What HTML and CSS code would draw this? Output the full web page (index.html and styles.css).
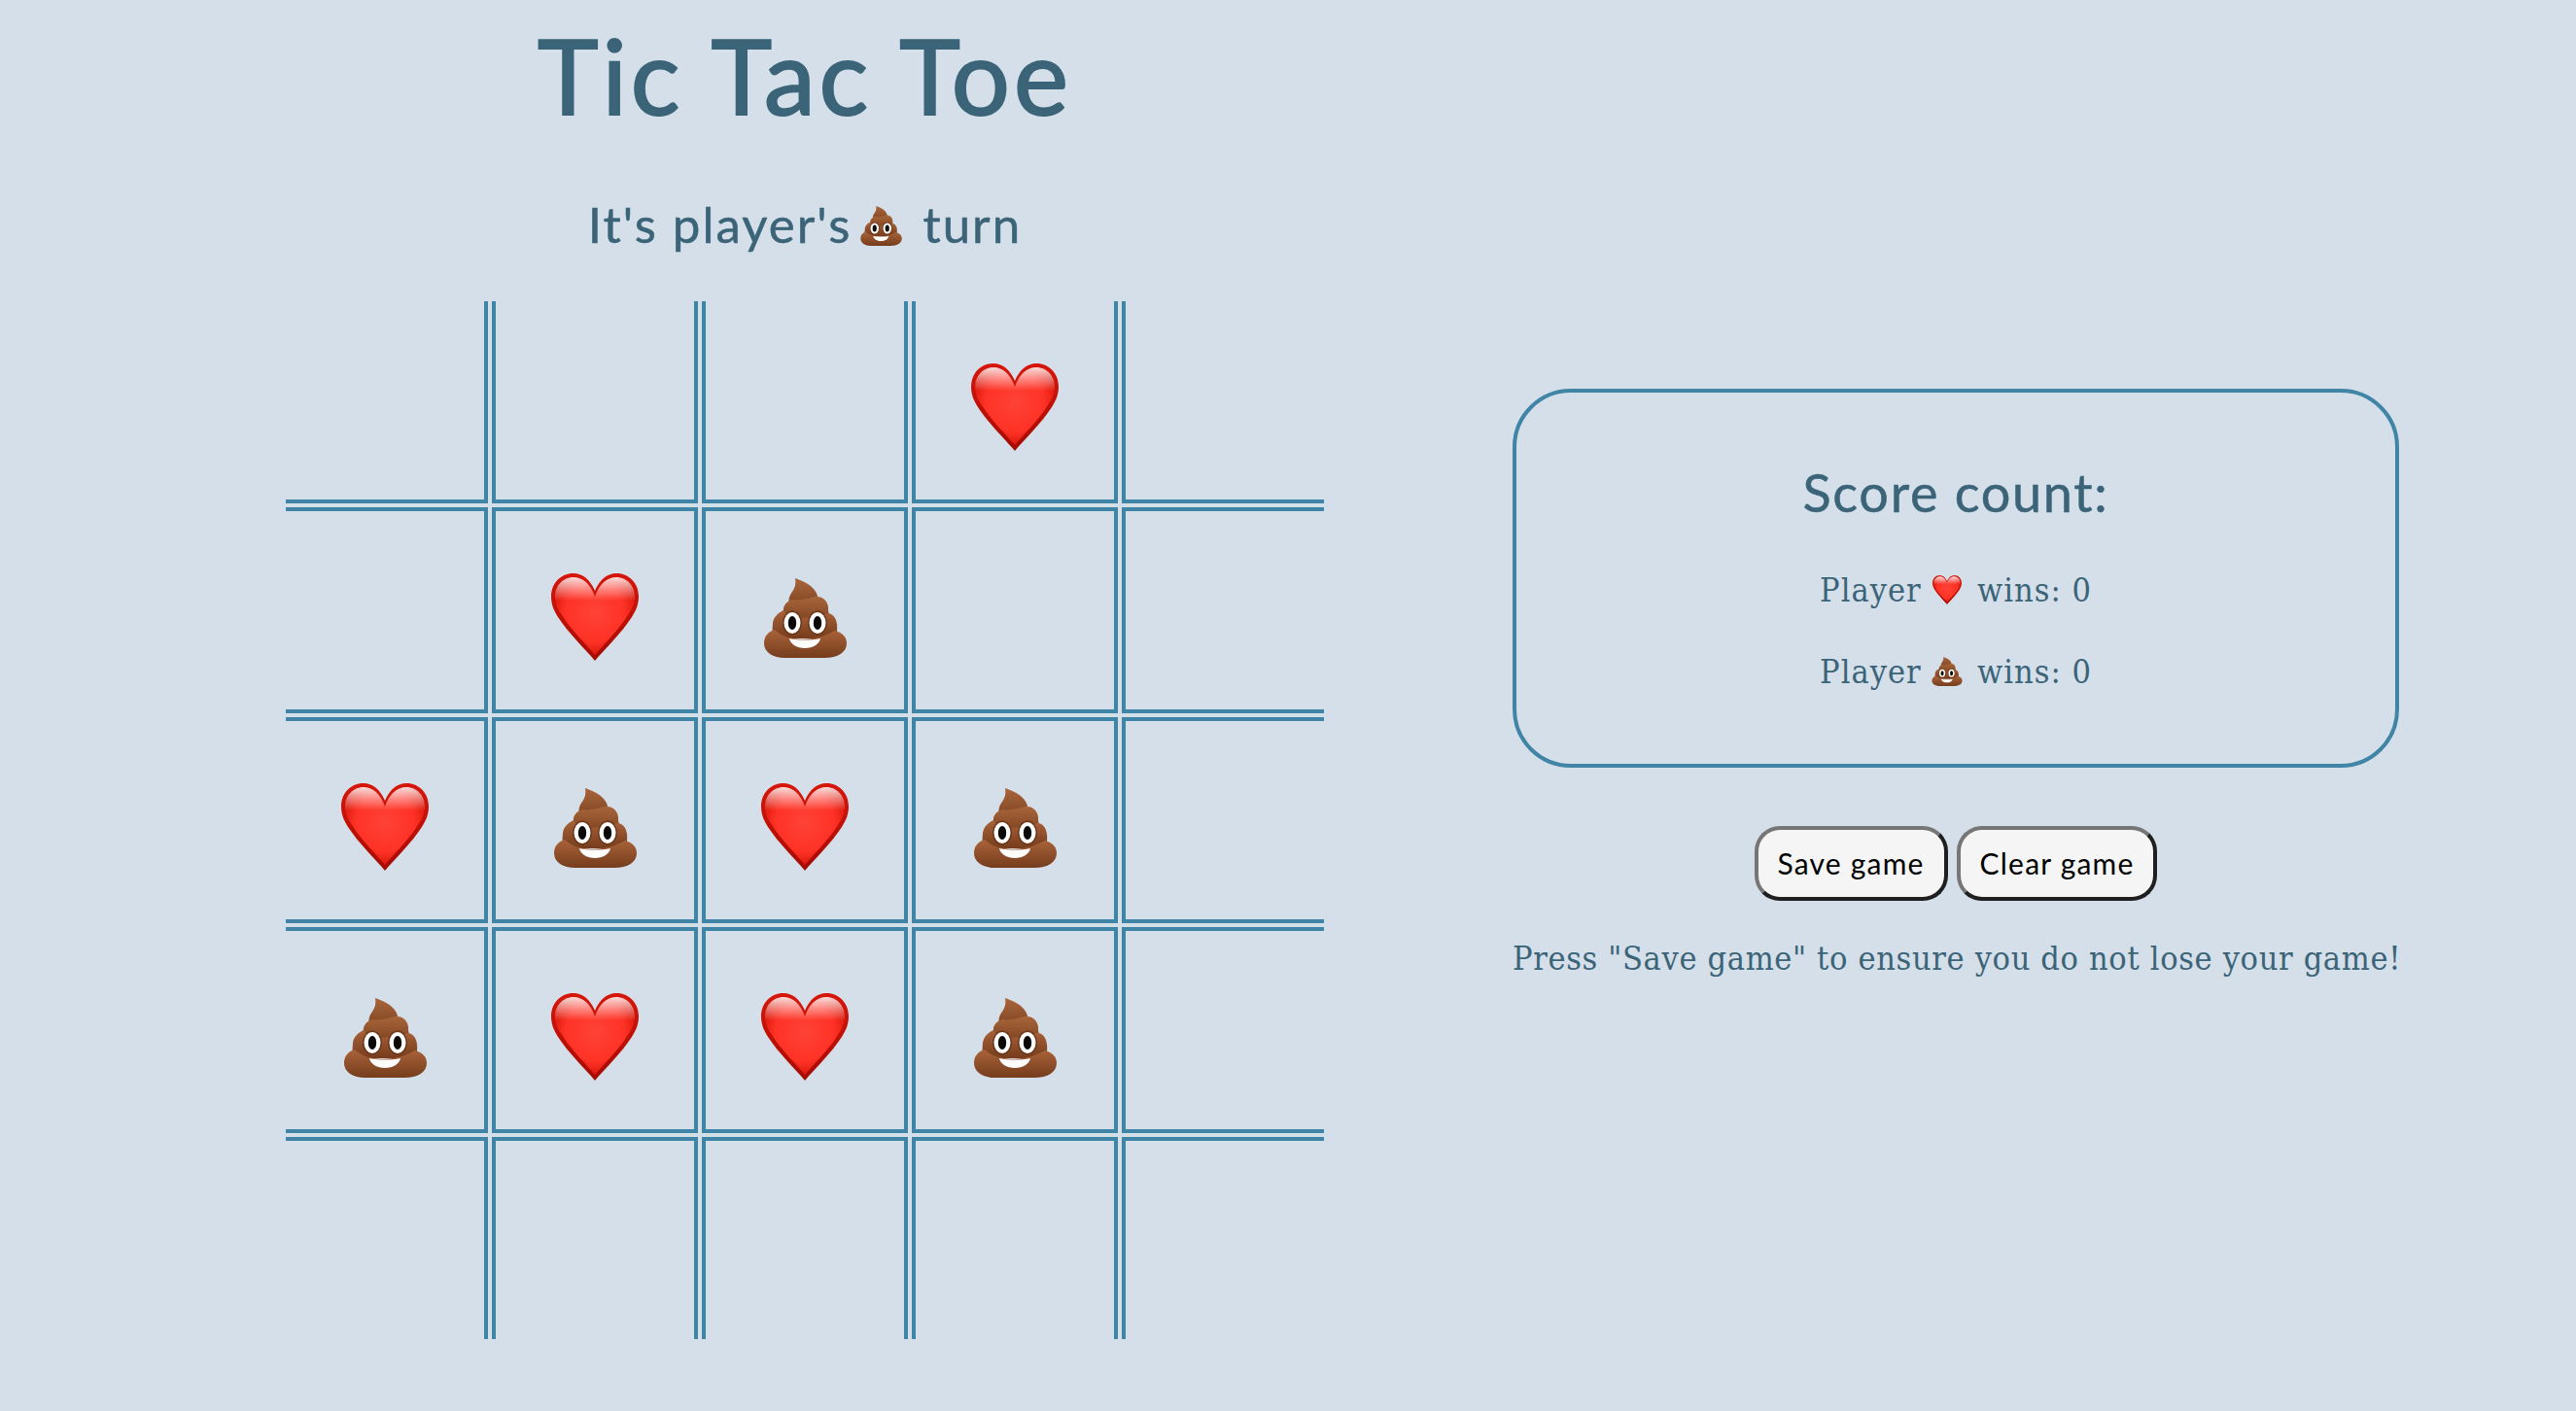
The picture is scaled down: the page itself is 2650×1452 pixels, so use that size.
FILE: index.html
```html
<!DOCTYPE html>
<html>
  <head>
    <meta charset="utf-8">
    <title>Tic Tac Toe</title>
    <link rel="stylesheet" href="styles.css">
  </head>

  <body>
    <!-- Emoji drawn once, reused below -->
    <svg class="icon-defs" aria-hidden="true">
      <defs>
        <linearGradient id="heartRim" x1="0" y1="0" x2="0" y2="1">
          <stop offset="0" stop-color="#d8160a"/>
          <stop offset="1" stop-color="#a50b02"/>
        </linearGradient>
        <radialGradient id="heartFill" gradientUnits="userSpaceOnUse" cx="45" cy="40" r="50">
          <stop offset="0" stop-color="#ff4236"/>
          <stop offset="0.6" stop-color="#ff3226"/>
          <stop offset="0.85" stop-color="#e01c10"/>
          <stop offset="1" stop-color="#b50d03"/>
        </radialGradient>
        <linearGradient id="heartShine" gradientUnits="userSpaceOnUse" x1="0" y1="4" x2="0" y2="28">
          <stop offset="0" stop-color="#ffffff" stop-opacity="0.85"/>
          <stop offset="1" stop-color="#ffffff" stop-opacity="0"/>
        </linearGradient>
        <linearGradient id="poopTop" x1="0" y1="0" x2="0" y2="1">
          <stop offset="0" stop-color="#a9653a"/>
          <stop offset="1" stop-color="#7f4522"/>
        </linearGradient>
        <linearGradient id="poopBase" x1="0" y1="0" x2="0" y2="1">
          <stop offset="0" stop-color="#a9633a"/>
          <stop offset="1" stop-color="#763c1c"/>
        </linearGradient>
      </defs>
      <symbol id="heart" viewBox="0 0 90 90">
        <path fill="url(#heartRim)" d="M45 90C36 79 18 62 7 45C2 37 0 31 0 24C0 10 10 0 23 0C32 0 40 6 45 18C50 6 58 0 67 0C80 0 90 10 90 24C90 31 88 37 83 45C72 62 54 79 45 90Z"/>
        <path fill="url(#heartFill)" d="M45 84C37 74 21 59 11 43C6 36 4 30 4 24C4 13 12 4 23 4C32 4 40 10 45 24C50 10 58 4 67 4C78 4 86 13 86 24C86 30 84 36 79 43C69 59 53 74 45 84Z"/>
        <path fill="url(#heartShine)" d="M45 84C37 74 21 59 11 43C6 36 4 30 4 24C4 13 12 4 23 4C32 4 40 10 45 24C50 10 58 4 67 4C78 4 86 13 86 24C86 30 84 36 79 43C69 59 53 74 45 84Z"/>
      </symbol>
      <symbol id="poop" viewBox="0 0 85 82">
        <path fill="url(#poopTop)" d="M32 0C37 2 46 5 51 11C56 17 56 22 54 26L28 30C24 26 25 19 29 14C32 10 33 5 32 0Z"/>
        <path fill="url(#poopTop)" d="M30 22C38 24 46 20 53 19C62 18 67 26 66 33L68 44H19L20 31C21 26 25 23 30 22Z"/>
        <path fill="url(#poopBase)" d="M20 33C26 44 42 42 66 36C73 37 76 45 75 54L76 62H8L9 46C10 40 14 36 20 33Z"/>
        <path fill="url(#poopBase)" d="M11 53C24 66 52 66 73 54C81 56 85 61 85 67C85 76 76 82 62 82H22C9 82 0 76 0 67C0 60 4 55 11 53Z"/>
        <ellipse fill="#6b3618" cx="29" cy="46" rx="10" ry="12.5"/>
        <ellipse fill="#6b3618" cx="55" cy="46" rx="10" ry="12.5"/>
        <ellipse fill="#ffffff" cx="29" cy="46" rx="8.5" ry="11"/>
        <ellipse fill="#ffffff" cx="55" cy="46" rx="8.5" ry="11"/>
        <ellipse fill="#0c0a08" cx="29" cy="46" rx="4.2" ry="7"/>
        <ellipse fill="#0c0a08" cx="55" cy="46" rx="4.2" ry="7"/>
        <path fill="#ffffff" d="M26 62C36 64 48 64 58 62C57 68 50 72 42 72C34 72 27 68 26 62Z"/>
      </symbol>
    </svg>

    <main>
      <!-- Game -->
      <section class="game">
        <h1>Tic Tac Toe</h1>
        <h2 class="turn">It's player's <svg class="emoji emoji-turn"><use href="#poop"/></svg> turn</h2>

        <div class="board">
          <div class="cell"></div>
          <div class="cell"></div>
          <div class="cell"></div>
          <div class="cell"><svg class="mark"><use href="#heart"/></svg></div>
          <div class="cell"></div>

          <div class="cell"></div>
          <div class="cell"><svg class="mark"><use href="#heart"/></svg></div>
          <div class="cell"><svg class="mark mark-poop"><use href="#poop"/></svg></div>
          <div class="cell"></div>
          <div class="cell"></div>

          <div class="cell"><svg class="mark"><use href="#heart"/></svg></div>
          <div class="cell"><svg class="mark mark-poop"><use href="#poop"/></svg></div>
          <div class="cell"><svg class="mark"><use href="#heart"/></svg></div>
          <div class="cell"><svg class="mark mark-poop"><use href="#poop"/></svg></div>
          <div class="cell"></div>

          <div class="cell"><svg class="mark mark-poop"><use href="#poop"/></svg></div>
          <div class="cell"><svg class="mark"><use href="#heart"/></svg></div>
          <div class="cell"><svg class="mark"><use href="#heart"/></svg></div>
          <div class="cell"><svg class="mark mark-poop"><use href="#poop"/></svg></div>
          <div class="cell"></div>

          <div class="cell"></div>
          <div class="cell"></div>
          <div class="cell"></div>
          <div class="cell"></div>
          <div class="cell"></div>
        </div>
      </section>

      <!-- Score -->
      <section class="side">
        <div class="score-box">
          <h2 class="score-title">Score count:</h2>
          <p class="score-line">Player <svg class="emoji"><use href="#heart"/></svg> wins: 0</p>
          <p class="score-line">Player <svg class="emoji"><use href="#poop"/></svg> wins: 0</p>
        </div>

        <div class="actions">
          <button class="action-button">Save game</button>
          <button class="action-button">Clear game</button>
        </div>

        <p class="note">Press "Save game" to ensure you do not lose your game!</p>
      </section>
    </main>
  </body>
</html>
```

FILE: styles.css
```css
/*
  Color Palette:
  #D4DFE9 page, #3B6478 text, #4084A6 lines
*/

* {
  margin: 0;
  padding: 0;
  box-sizing: border-box;
}

body {
  font-family: "DejaVu Serif", serif;
  background-color: #D4DFE9;
  color: #3B6478;
  height: 1452px;
  overflow: hidden;
}

.icon-defs {
  display: block;
  width: 0;
  height: 0;
}

main {
  display: flex;
  align-items: flex-start;
  padding-left: 294px;
}

/* Game column */
.game {
  width: 1068px;
  text-align: center;
}

h1,
h2 {
  font-family: Lato, sans-serif;
  font-weight: 400;
}

h1 {
  font-size: 106px;
  line-height: 116px;
  letter-spacing: 4px;
  padding-top: 19px;
  -webkit-text-stroke: 2px #3B6478;
}

.turn {
  font-size: 51px;
  line-height: 62px;
  margin-top: 65px;
  letter-spacing: 2px;
  -webkit-text-stroke: 0.5px #3B6478;
}

.emoji-turn {
  width: 43px;
  height: 41px;
  margin-left: -6px;
  margin-right: 6px;
}

.emoji {
  vertical-align: -3px;
}

/* Board */
.board {
  display: grid;
  grid-template-columns: repeat(5, auto);
  gap: 4px;
  margin-top: 48px;
}

.cell {
  box-sizing: content-box;
  width: 204px;
  height: 204px;
  border: 4px solid #4084A6;
  display: flex;
  align-items: center;
  justify-content: center;
}

.cell:nth-child(-n+5) {
  border-top: none;
}
.cell:nth-child(n+21) {
  border-bottom: none;
}
.cell:nth-child(5n+1) {
  border-left: none;
}
.cell:nth-child(5n) {
  border-right: none;
}

.mark {
  width: 90px;
  height: 90px;
  margin-top: 14px;
}

.mark-poop {
  width: 85px;
  height: 82px;
  margin-top: 16px;
}

/* Score column */
.side {
  width: 912px;
  margin-left: 194px;
  margin-top: 400px;
  text-align: center;
}

.score-box {
  height: 390px;
  border: 4px solid #4084A6;
  border-radius: 60px;
  padding-top: 73px;
}

.score-title {
  font-size: 54px;
  line-height: 60px;
  letter-spacing: 1.7px;
  -webkit-text-stroke: 0.5px #3B6478;
}

.score-line {
  font-size: 34px;
  font-stretch: condensed;
  letter-spacing: 1px;
  line-height: 44px;
  margin-top: 40px;
}

.score-title + .score-line {
  margin-top: 48px;
}

.score-line .emoji {
  width: 32px;
  height: 30px;
  margin-right: 4px;
}

.actions {
  display: flex;
  justify-content: center;
  gap: 9px;
  margin-top: 60px;
}

.action-button {
  font-family: Lato, sans-serif;
  font-size: 30px;
  letter-spacing: 1.2px;
  color: #000000;
  background-color: #F5F5F5;
  border: 4px solid;
  border-color: #767676 #1F1F1F #1F1F1F #767676;
  border-radius: 26px;
  height: 77px;
  padding: 0 20px 2px;
}

.note {
  font-size: 34px;
  font-stretch: condensed;
  letter-spacing: 0.65px;
  line-height: 44px;
  margin-top: 37px;
  white-space: nowrap;
}
```
